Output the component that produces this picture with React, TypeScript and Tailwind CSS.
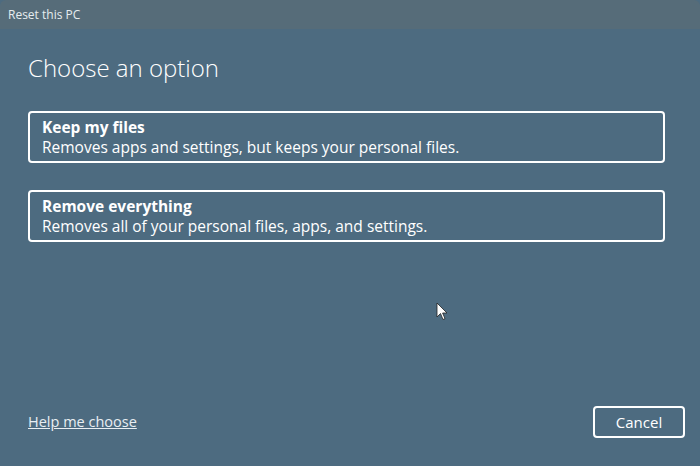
import React from 'react';

const options = [
  { title: 'Keep my files', desc: 'Removes apps and settings, but keeps your personal files.' },
  { title: 'Remove everything', desc: 'Removes all of your personal files, apps, and settings.' },
];

export default function App() {
  return (
    <div
      className="relative w-[700px] h-[466px] overflow-hidden bg-[#4d6b80] text-white flex flex-col"
      style={{ fontFamily: '"Segoe UI", "Open Sans", "Noto Sans", sans-serif' }}
    >
      <div className="h-[29px] shrink-0 bg-[#566c79] flex items-center px-2 text-[12px] text-[#e6ecef] rounded-t-[6px]">
        Reset this PC
      </div>
      <div className="flex-1 flex flex-col px-7 pb-7">
        <h1 className="mt-[23px] text-[24px] leading-[32px] font-light">Choose an option</h1>
        <div className="mt-[27px] w-[637px] flex flex-col gap-[27px]">
          {options.map((o) => (
            <button
              key={o.title}
              className="h-[52px] border-2 border-white rounded-[4px] px-3 flex flex-col justify-center items-start text-left"
            >
              <span className="text-[15.5px] leading-[20px] font-bold">{o.title}</span>
              <span className="text-[15.5px] leading-[20px]">{o.desc}</span>
            </button>
          ))}
        </div>
        <div className="mt-auto flex items-center justify-between -mr-[13px]">
          <a className="text-[14.5px] underline text-[#e8eef2]">Help me choose</a>
          <button className="w-[92px] h-[32px] border-2 border-white rounded-[4px] text-[15px]">Cancel</button>
        </div>
      </div>
      <svg className="absolute left-[436px] top-[302px]" width="12" height="19" viewBox="0 0 12 19">
        <path d="M1 1 L1 15 L4.5 11.5 L7 17.5 L9 16.6 L6.6 11 L11 11 Z" fill="white" stroke="#222" strokeWidth="0.8" />
      </svg>
    </div>
  );
}
